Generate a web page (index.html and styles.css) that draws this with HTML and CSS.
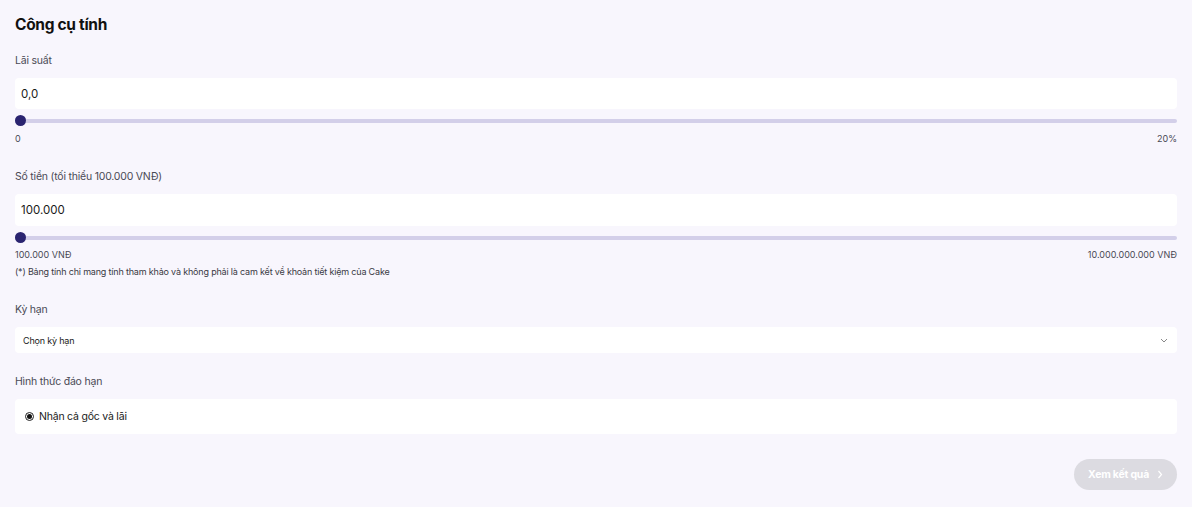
FILE: index.html
```html
<!DOCTYPE html>
<html lang="vi">
<head>
  <meta charset="UTF-8">
  <title>Công cụ tính</title>
  <link rel="stylesheet" href="styles.css">
</head>
<body>
  <div class="calc">
    <h1 class="calc-title">Công cụ tính</h1>

    <div class="field field-rate">
      <label class="field-label">Lãi suất</label>
      <div class="input-box">0,0</div>
      <div class="slider"><span class="slider-thumb"></span></div>
      <div class="slider-range"><span>0</span><span>20%</span></div>
    </div>

    <div class="field field-amount">
      <label class="field-label">Số tiền (tối thiểu 100.000 VNĐ)</label>
      <div class="input-box">100.000</div>
      <div class="slider"><span class="slider-thumb"></span></div>
      <div class="slider-range"><span>100.000 VNĐ</span><span>10.000.000.000 VNĐ</span></div>
      <p class="note">(*) Bảng tính chỉ mang tính tham khảo và không phải là cam kết về khoản tiết kiệm của Cake</p>
    </div>

    <div class="field field-term">
      <label class="field-label">Kỳ hạn</label>
      <div class="select-box">
        <span>Chọn kỳ hạn</span>
        <svg class="chevron-down" width="8" height="5" viewBox="0 0 8 5"><path d="M1 1l3 3 3-3" fill="none" stroke="#888" stroke-width="1"/></svg>
      </div>
    </div>

    <div class="field field-maturity">
      <label class="field-label">Hình thức đáo hạn</label>
      <div class="radio-box">
        <span class="radio"><span class="radio-dot"></span></span>
        <span>Nhận cả gốc và lãi</span>
      </div>
    </div>

    <div class="actions">
      <button class="btn-result" disabled>Xem kết quả
        <svg width="6" height="9" viewBox="0 0 6 9"><path d="M1.5 1l3 3.5-3 3.5" fill="none" stroke="#fff" stroke-width="1.2"/></svg>
      </button>
    </div>
  </div>
</body>
</html>
```

FILE: styles.css
```css
body {
  margin: 0;
  background: #f8f6fd;
  font-family: Inter, "Noto Sans", sans-serif;
  color: #1d1d24;
}

.calc {
  padding: 15px 15px 17px;
}

.calc-title {
  margin: 0;
  font-size: 15.5px;
  line-height: 20px;
  font-weight: 700;
  letter-spacing: -0.02em;
  color: #111;
}

.field-label {
  display: block;
  font-size: 10.5px;
  line-height: 16px;
  letter-spacing: -0.02em;
  color: #4a4a55;
}

.field-rate { margin-top: 18px; }
.field-amount { margin-top: 24px; }
.field-term { margin-top: 24px; }
.field-maturity { margin-top: 21px; }

.input-box {
  margin-top: 9px;
  height: 31px;
  padding: 0 6px;
  background: #fff;
  border-radius: 4px;
  display: flex;
  align-items: center;
  font-size: 11.5px;
  color: #1a1a1a;
}

.field-amount .input-box {
  height: 32px;
}

.slider {
  position: relative;
  margin-top: 6px;
  height: 12px;
  display: flex;
  align-items: center;
}

.slider::before {
  content: "";
  flex: 1;
  height: 4px;
  border-radius: 2px;
  background: #d3cfe9;
}

.slider-thumb {
  position: absolute;
  left: 0;
  top: 0;
  width: 11px;
  height: 11px;
  border-radius: 50%;
  background: #2a2470;
}

.slider-range {
  margin-top: 6px;
  display: flex;
  justify-content: space-between;
  font-size: 9px;
  line-height: 12px;
  color: #4a4a55;
}

.field-amount .slider-range { margin-top: 5px; }

.note {
  margin: 5px 0 0;
  font-size: 9px;
  line-height: 12px;
  letter-spacing: -0.02em;
  color: #3a3a44;
}

.select-box {
  margin-top: 9px;
  height: 26px;
  padding: 0 9px 0 8px;
  background: #fff;
  border-radius: 4px;
  display: flex;
  align-items: center;
  justify-content: space-between;
  font-size: 9px;
  letter-spacing: -0.02em;
  color: #1a1a1a;
}

.radio-box {
  margin-top: 9px;
  height: 35px;
  padding: 0 10px;
  background: #fff;
  border-radius: 4px;
  display: flex;
  align-items: center;
  gap: 5px;
  font-size: 10.5px;
  letter-spacing: -0.02em;
  color: #1a1a1a;
}

.radio {
  width: 9px;
  height: 9px;
  border: 1px solid #222;
  border-radius: 50%;
  display: flex;
  align-items: center;
  justify-content: center;
  box-sizing: border-box;
}

.radio-dot {
  width: 5px;
  height: 5px;
  border-radius: 50%;
  background: #111;
}

.actions {
  margin-top: 25px;
  display: flex;
  justify-content: flex-end;
}

.btn-result {
  height: 31px;
  width: 103px;
  border: none;
  border-radius: 16px;
  background: #dcdbe1;
  color: #fff;
  font-family: inherit;
  font-size: 10.5px;
  font-weight: 700;
  letter-spacing: -0.02em;
  display: flex;
  align-items: center;
  justify-content: center;
  gap: 8px;
  padding: 0;
}
```
